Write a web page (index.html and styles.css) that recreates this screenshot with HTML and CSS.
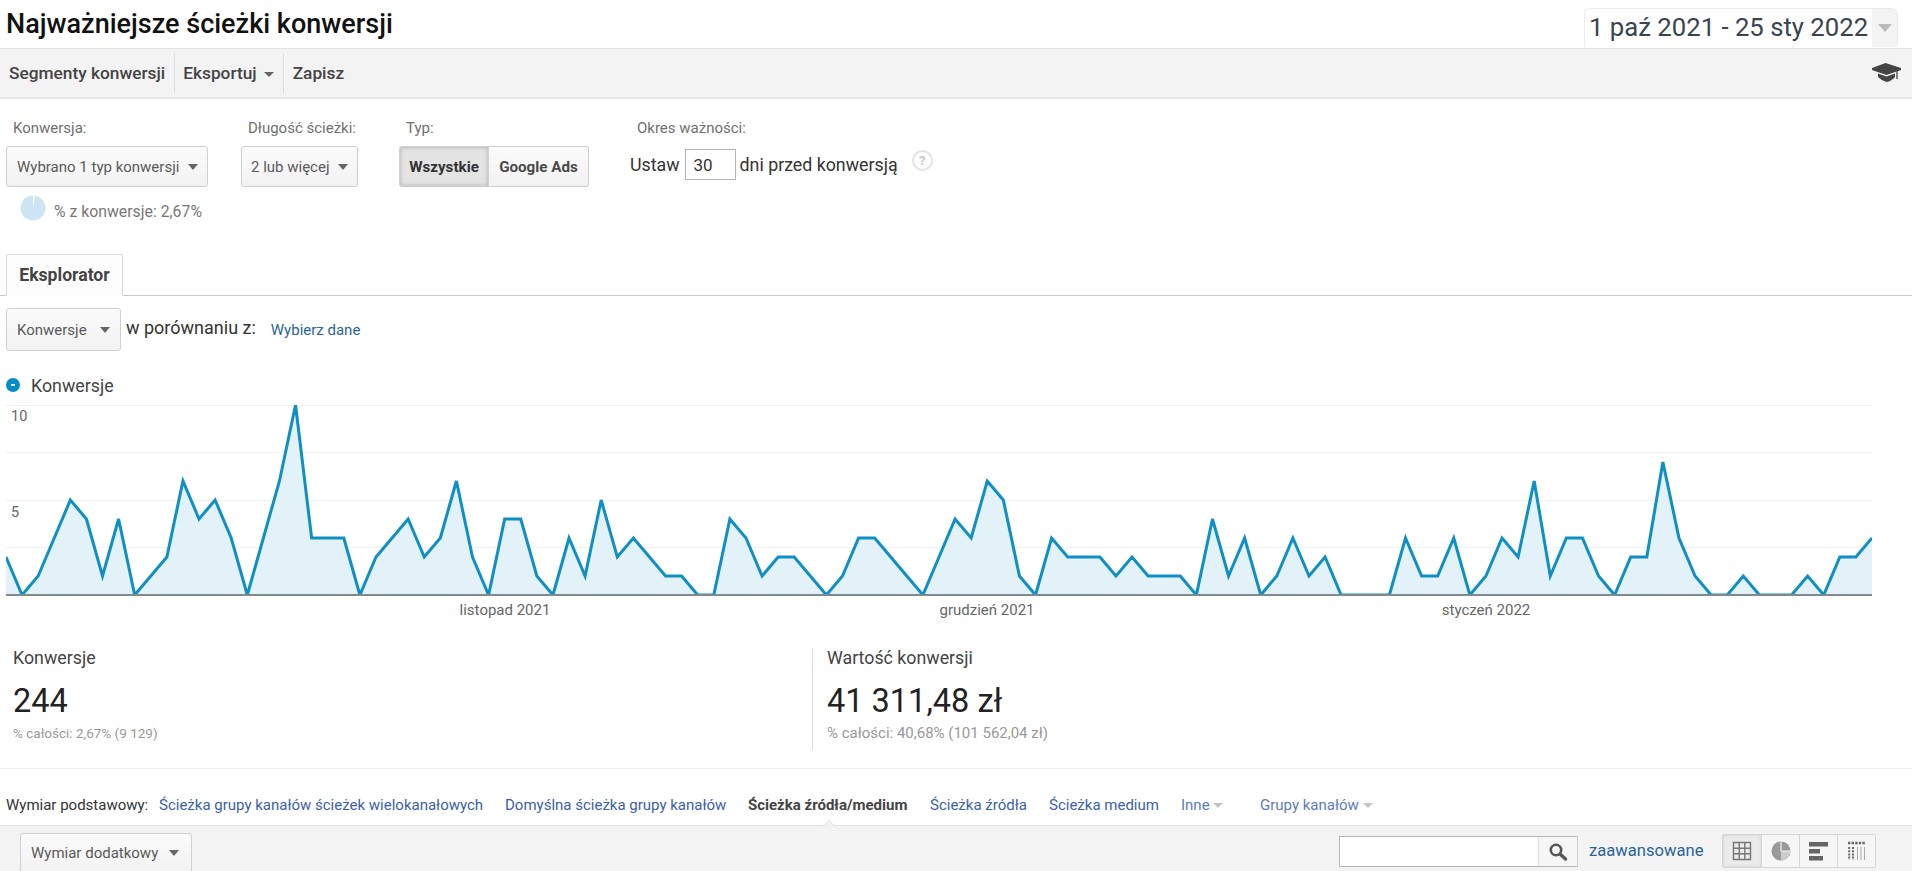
FILE: index.html
```html
<!DOCTYPE html>
<html lang="pl">
<head>
<meta charset="utf-8">
<title>Najważniejsze ścieżki konwersji</title>
<link rel="stylesheet" href="styles.css">
</head>
<body>
<div class="page">
  <header class="title-row">
    <h1 class="title">Najważniejsze ścieżki konwersji</h1>
    <div class="date-box"><span class="date-text">1 paź 2021 - 25 sty 2022</span><span class="date-arrow"><i class="caret caret-date"></i></span></div>
  </header>

  <nav class="toolbar">
    <span class="tool">Segmenty konwersji</span>
    <span class="tool">Eksportuj <i class="caret caret-tool"></i></span>
    <span class="tool">Zapisz</span>
    <svg class="cap" viewBox="0 0 29 20" aria-hidden="true">
      <path d="M13.5 0 L29 5 L29 7 L14.5 12 L0 7 L0 5 Z" fill="#444"/>
      <path d="M6 10.5 L14.5 13.5 L23 10.5 L23 14 Q19 18.5 14.5 19 Q10 18 6 14 Z" fill="#444"/>
      <path d="M25 8 L25 16" stroke="#666" stroke-width="1.6"/>
    </svg>
  </nav>

  <section class="filters">
    <div class="field field-conv">
      <div class="field-label">Konwersja:</div>
      <div class="select select-conv">Wybrano 1 typ konwersji <i class="caret"></i></div>
      <div class="pie-row">
        <svg class="pie" viewBox="0 0 26 26" aria-hidden="true"><circle cx="13" cy="13" r="12.5" fill="#cde5f3"/><path d="M13 13 L13 .5 A12.5 12.5 0 0 1 15 .7 Z" fill="#fff"/></svg>
        <span>% z konwersje: 2,67%</span>
      </div>
    </div>
    <div class="field field-len">
      <div class="field-label">Długość ścieżki:</div>
      <div class="select select-len">2 lub więcej <i class="caret"></i></div>
    </div>
    <div class="field field-type">
      <div class="field-label">Typ:</div>
      <div class="btn-group">
        <span class="btn btn-on">Wszystkie</span><span class="btn">Google Ads</span>
      </div>
    </div>
    <div class="field field-period">
      <div class="field-label">Okres ważności:</div>
      <div class="period">
        <span>Ustaw</span><span class="num-input">30</span><span>dni przed konwersją</span>
        <span class="help">?</span>
      </div>
    </div>
  </section>

  <div class="tabs"><span class="tab">Eksplorator</span></div>

  <div class="compare">
    <div class="select select-metric">Konwersje <i class="caret"></i></div>
    <span class="compare-text">w porównaniu z:</span>
    <span class="compare-link">Wybierz dane</span>
  </div>

  <div class="legend"><i class="legend-dot"></i>Konwersje</div>

  <div class="chart">
    <svg class="plot" viewBox="0 0 1866 190" preserveAspectRatio="none" aria-hidden="true">
      <g stroke="#f1f1f1" stroke-width="1.2">
        <line x1="0" x2="1866" y1="0.5" y2="0.5"/>
        <line x1="0" x2="1866" y1="47.5" y2="47.5"/>
        <line x1="0" x2="1866" y1="95.5" y2="95.5"/>
        <line x1="0" x2="1866" y1="142.5" y2="142.5"/>
      </g>
      <svg x="0" y="0" width="1866" height="190" viewBox="0 0 116 10" preserveAspectRatio="none">
        <polygon class="area" points="0,10 0,8 1,10 2,9 3,7 4,5 5,6 6,9 7,6 8,10 9,9 10,8 11,4 12,6 13,5 14,7 15,10 16,7 17,4 18,0 19,7 20,7 21,7 22,10 23,8 24,7 25,6 26,8 27,7 28,4 29,8 30,10 31,6 32,6 33,9 34,10 35,7 36,9 37,5 38,8 39,7 40,8 41,9 42,9 43,10 44,10 45,6 46,7 47,9 48,8 49,8 50,9 51,10 52,9 53,7 54,7 55,8 56,9 57,10 58,8 59,6 60,7 61,4 62,5 63,9 64,10 65,7 66,8 67,8 68,8 69,9 70,8 71,9 72,9 73,9 74,10 75,6 76,9 77,7 78,10 79,9 80,7 81,9 82,8 83,10 84,10 85,10 86,10 87,7 88,9 89,9 90,7 91,10 92,9 93,7 94,8 95,4 96,9 97,7 98,7 99,9 100,10 101,8 102,8 103,3 104,7 105,9 106,10 107,10 108,9 109,10 110,10 111,10 112,9 113,10 114,8 115,8 116,7 116,10"/>
        <polyline class="line" points="0,8 1,10 2,9 3,7 4,5 5,6 6,9 7,6 8,10 9,9 10,8 11,4 12,6 13,5 14,7 15,10 16,7 17,4 18,0 19,7 20,7 21,7 22,10 23,8 24,7 25,6 26,8 27,7 28,4 29,8 30,10 31,6 32,6 33,9 34,10 35,7 36,9 37,5 38,8 39,7 40,8 41,9 42,9 43,10 44,10 45,6 46,7 47,9 48,8 49,8 50,9 51,10 52,9 53,7 54,7 55,8 56,9 57,10 58,8 59,6 60,7 61,4 62,5 63,9 64,10 65,7 66,8 67,8 68,8 69,9 70,8 71,9 72,9 73,9 74,10 75,6 76,9 77,7 78,10 79,9 80,7 81,9 82,8 83,10 84,10 85,10 86,10 87,7 88,9 89,9 90,7 91,10 92,9 93,7 94,8 95,4 96,9 97,7 98,7 99,9 100,10 101,8 102,8 103,3 104,7 105,9 106,10 107,10 108,9 109,10 110,10 111,10 112,9 113,10 114,8 115,8 116,7"/>
      </svg>
    </svg>
    <span class="y-label y-10">10</span>
    <span class="y-label y-5">5</span>
    <span class="x-label x-nov">listopad 2021</span>
    <span class="x-label x-dec">grudzień 2021</span>
    <span class="x-label x-jan">styczeń 2022</span>
  </div>

  <section class="metrics">
    <div class="metric metric-a">
      <div class="metric-name">Konwersje</div>
      <div class="metric-value">244</div>
      <div class="metric-sub">% całości: 2,67% (9 129)</div>
    </div>
    <div class="metric metric-b">
      <div class="metric-name">Wartość konwersji</div>
      <div class="metric-value">41 311,48 zł</div>
      <div class="metric-sub">% całości: 40,68% (101 562,04 zł)</div>
    </div>
  </section>

  <div class="dims">
    <span class="dim-label">Wymiar podstawowy:</span>
    <a class="dim dim-1">Ścieżka grupy kanałów ścieżek wielokanałowych</a>
    <a class="dim dim-2">Domyślna ścieżka grupy kanałów</a>
    <strong class="dim dim-active">Ścieżka źródła/medium</strong>
    <a class="dim dim-3">Ścieżka źródła</a>
    <a class="dim dim-4">Ścieżka medium</a>
    <a class="dim dim-5">Inne <i class="caret caret-dim"></i></a>
    <a class="dim dim-6">Grupy kanałów <i class="caret caret-dim"></i></a>
  </div>

  <div class="table-bar">
    <i class="notch"></i>
    <div class="select select-dim">Wymiar dodatkowy <i class="caret"></i></div>
    <div class="bar-right">
      <div class="search">
        <span class="search-input"></span>
        <span class="search-btn">
          <svg viewBox="0 0 20 20" width="20" height="20" aria-hidden="true"><circle cx="8" cy="8" r="5.2" fill="none" stroke="#555" stroke-width="2.6"/><path d="M12 12 L17.5 17" stroke="#555" stroke-width="3.4" stroke-linecap="round"/></svg>
        </span>
      </div>
      <span class="adv">zaawansowane</span>
      <div class="views">
        <span class="view view-on">
          <svg viewBox="0 0 20 20" width="20" height="20" aria-hidden="true"><path d="M1.5 1.5H18.5V18.5H1.5ZM7.2 1.5V18.5M12.8 1.5V18.5M1.5 7.2H18.5M1.5 12.8H18.5" fill="none" stroke="#777" stroke-width="1.4"/></svg>
        </span>
        <span class="view">
          <svg viewBox="0 0 20 20" width="20" height="20" aria-hidden="true"><circle cx="10" cy="10" r="9.5" fill="#999"/><path d="M10 .5V10H19.5A9.5 9.5 0 0 1 10 19.5Z" fill="#ccc"/><path d="M10 .5V10H19.5" fill="none" stroke="#f3f3f3" stroke-width="1.2"/></svg>
        </span>
        <span class="view">
          <svg viewBox="0 0 20 20" width="20" height="20" aria-hidden="true"><rect x="0" y="1" width="19" height="4.5" fill="#666"/><rect x="0" y="8" width="11" height="4.5" fill="#666"/><rect x="0" y="15" width="14" height="4.5" fill="#666"/></svg>
        </span>
        <span class="view">
          <svg viewBox="0 0 20 20" width="20" height="20" aria-hidden="true"><path d="M1 2H19" stroke="#666" stroke-width="2.4" stroke-dasharray="2.4 1.2"/><path d="M2.2 6V19M6 6V19" stroke="#666" stroke-width="2" stroke-dasharray="2 1.2"/><path d="M10.5 6V19M14 6V19M17.5 6V19" stroke="#aaa" stroke-width="1"/></svg>
        </span>
      </div>
    </div>
  </div>
</div>
</body>
</html>
```
FILE: styles.css
```css
* { box-sizing: border-box; }
html, body { margin: 0; padding: 0; height: 871px; overflow: hidden; background: #fff; }
body { font-family: Roboto, "Noto Sans", "Liberation Sans", sans-serif; color: #333; }
.page { width: 1912px; height: 871px; overflow: hidden; }

.caret { display: inline-block; width: 0; height: 0; border-left: 5px solid transparent; border-right: 5px solid transparent; border-top: 6px solid #666; vertical-align: 2px; }

/* Title */
.title-row { height: 48px; display: flex; justify-content: space-between; align-items: flex-start; padding: 8px 14px 0 6px; }
.title { margin: 1px 0 0; font-size: 27px; line-height: 30px; font-weight: 500; color: #111; }
.date-box { width: 314px; height: 39px; display: flex; border: 1px solid #ececec; border-bottom: 0; border-radius: 6px 6px 0 0; overflow: hidden; }
.date-text { width: 287px; padding-left: 4px; font-size: 25.7px; line-height: 36px; color: #3a4450; white-space: nowrap; }
.date-arrow { flex: 1; background: #f3f3f3; display: flex; align-items: center; justify-content: center; }
.caret-date { border-left-width: 7px; border-right-width: 7px; border-top: 8px solid #bbb; vertical-align: 0; }

/* Toolbar */
.toolbar { height: 51px; background: #f3f3f3; border-top: 1px solid #e3e3e3; border-bottom: 2px solid #e8e8e8; display: flex; align-items: center; padding-left: 1px; }
.tool { height: 40px; display: flex; align-items: center; gap: 7px; padding: 0 8px; font-size: 17.3px; font-weight: 500; color: #444; border-right: 1px solid #dedede; }
.tool:first-child { padding-right: 9px; }
.tool:nth-child(2) { padding-right: 9px; }
.tool:nth-child(3) { border-right: 0; padding-left: 9px; }
.caret-tool { border-left-width: 5px; border-right-width: 5px; border-top: 5px solid #666; margin-top: 3px; }
.cap { width: 29px; height: 20px; margin-left: auto; margin-right: 11px; }

/* Filters */
.filters { height: 155px; display: flex; padding: 20px 0 0 6px; align-items: flex-start; }
.field-label { font-size: 15px; line-height: 18px; color: #6f6f6f; padding-left: 7px; margin-bottom: 9px; }
.select { display: flex; align-items: center; justify-content: space-between; font-size: 15px; color: #5a5a5a; border: 1px solid #cfcfcf; border-radius: 3px; background: linear-gradient(#fbfbfb, #f2f2f2); white-space: nowrap; }
.field-conv { width: 202px; margin-right: 33px; }
.select-conv { height: 41px; padding: 0 9px 0 10px; }
.pie-row { display: flex; align-items: center; gap: 8px; margin: 8px 0 0 14px; font-size: 15.8px; color: #777; }
.pie-row span { position: relative; top: 3px; white-space: nowrap; }
.pie { width: 26px; height: 26px; }
.field-len { width: 117px; margin-right: 41px; }
.select-len { height: 41px; padding: 0 9px 0 9px; }
.field-type { width: 190px; margin-right: 41px; }
.btn-group { display: flex; height: 41px; }
.btn { display: flex; align-items: center; justify-content: center; border: 1px solid #cfcfcf; font-size: 15.2px; font-weight: 700; color: #4a4a4a; background: linear-gradient(#fbfbfb, #f2f2f2); width: 100px; border-radius: 0 3px 3px 0; border-left: 0; }
.btn-on { width: 90px; background: #e3e3e3; border-radius: 3px 0 0 3px; border-left: 1px solid #cfcfcf; box-shadow: inset 0 0 4px #aaa; color: #333; }
.period { display: flex; align-items: center; font-size: 17.8px; color: #333; margin-top: -2px; height: 41px; }
.num-input { width: 51px; height: 31px; border: 1px solid #b5b5b5; margin: 0 4px 0 5px; padding-left: 8px; line-height: 30px; font-size: 17px; }
.help { width: 21px; height: 21px; margin: -8px 0 0 14px; border: 2px solid #e4e4e4; border-radius: 50%; color: #c6c6c6; font-size: 13px; font-weight: 700; display: flex; align-items: center; justify-content: center; }

/* Tabs */
.tabs { height: 42px; padding-left: 6px; border-bottom: 1px solid #c9c9c9; }
.tab { display: inline-flex; align-items: center; justify-content: center; width: 117px; height: 42px; border: 1px solid #d9d9d9; border-bottom: 1px solid #fff; border-radius: 2px 2px 0 0; font-size: 17.6px; font-weight: 700; color: #444; background: #fdfdfd; }

/* Compare */
.compare { display: flex; align-items: center; margin-top: 12px; padding-left: 6px; height: 43px; }
.select-metric { width: 115px; height: 43px; padding: 0 10px 0 10px; }
.compare-text { margin-left: 5px; font-size: 18px; color: #333; position: relative; top: -2px; white-space: nowrap; }
.compare-link { margin-left: 15px; font-size: 15px; color: #2a6496; white-space: nowrap; }

/* Legend */
.legend { display: flex; align-items: center; height: 20px; margin-top: 24px; padding-left: 6px; font-size: 17.8px; color: #444; }
.legend-dot { width: 14px; height: 14px; margin-right: 11px; border-radius: 50%; background: #058dc7; position: relative; }
.legend-dot::after { content: ""; position: absolute; left: 5px; top: 6px; width: 4px; height: 2px; background: #fff; border-radius: 1px; }

/* Chart */
.chart { position: relative; height: 225px; margin-top: 10px; }
.plot { position: absolute; left: 6px; top: 0; width: 1866px; height: 190px; overflow: visible; }
.area { fill: #e3f1f8; }
.line { fill: none; stroke: #0f8fc4; stroke-width: 3px; vector-effect: non-scaling-stroke; stroke-linejoin: miter; }
.chart::after { content: ""; position: absolute; left: 6px; top: 188.5px; width: 1866px; height: 2.5px; background: #7f8a8e; }
.y-label { position: absolute; left: 11px; font-size: 14.5px; color: #666; line-height: 16px; }
.y-10 { top: 4px; }
.y-5 { top: 100px; }
.x-label { position: absolute; top: 197px; font-size: 15px; line-height: 16px; color: #666; transform: translateX(-50%); white-space: nowrap; }
.x-nov { left: 505px; }
.x-dec { left: 987px; }
.x-jan { left: 1486px; }

/* Metrics */
.metrics { display: flex; height: 139px; border-bottom: 1px solid #eeeeee; padding-top: 18px; }
.metric { height: 102px; padding-left: 13px; }
.metric-a { width: 812px; }
.metric-b { padding-left: 14px; border-left: 1px solid #dcdcdc; }
.metric-name { font-size: 17.8px; line-height: 20px; color: #444; }
.metric-value { margin-top: 14px; font-size: 32.5px; line-height: 38px; color: #222; }
.metric-sub { margin-top: 5px; font-size: 13.5px; line-height: 17px; color: #999; white-space: nowrap; }
.metric-b .metric-sub { font-size: 15px; }

/* Dimensions */
.dims { height: 56px; display: flex; align-items: center; padding: 15px 0 0 6px; font-size: 15px; white-space: nowrap; }
.dim-label { color: #333; width: 153px; }
.dim { color: #3c5fa8; }
.dim-1 { width: 346px; }
.dim-2 { width: 243px; }
.dim-active { width: 182px; font-weight: 700; color: #444; }
.dim-3 { width: 119px; }
.dim-4 { width: 132px; }
.dim-5 { width: 79px; color: #5c7cb8; }
.dim-6 { color: #5c7cb8; }
.caret-dim { border-left-width: 5px; border-right-width: 5px; border-top: 5px solid #c4c4c4; vertical-align: 2px; }

/* Table bar */
.table-bar { position: relative; height: 46px; background: #f3f3f3; border-top: 1px solid #e2e2e2; display: flex; align-items: flex-start; padding: 7px 36px 0 20px; }
.notch { position: absolute; left: 822px; top: -6px; width: 14px; height: 14px; transform: rotate(45deg) scale(.7); background: #f3f3f3; border-left: 1px solid #e2e2e2; border-top: 1px solid #e2e2e2; }
.select-dim { width: 172px; height: 40px; padding: 0 12px 0 10px; }
.bar-right { margin-left: auto; display: flex; align-items: flex-start; padding-top: 3px; }
.search { display: flex; width: 239px; height: 31px; border: 1px solid #b5b5b5; border-right-color: #d0d0d0; }
.search-input { width: 199px; background: #fff; border-right: 1px solid #ddd; }
.search-btn { flex: 1; display: flex; align-items: center; justify-content: center; background: #f6f6f6; }
.adv { margin: 5px 0 0 11px; width: 133px; font-size: 16.6px; line-height: 20px; color: #2a6496; white-space: nowrap; }
.views { display: flex; margin-top: -2px; height: 34px; border: 1px solid #d6d6d6; border-radius: 2px; }
.view { width: 38px; display: flex; align-items: center; justify-content: center; border-left: 1px solid #d6d6d6; background: #f6f6f6; }
.view:first-child { border-left: 0; }
.view-on { background: #ebebeb; box-shadow: inset 0 0 3px #ccc; }
```
